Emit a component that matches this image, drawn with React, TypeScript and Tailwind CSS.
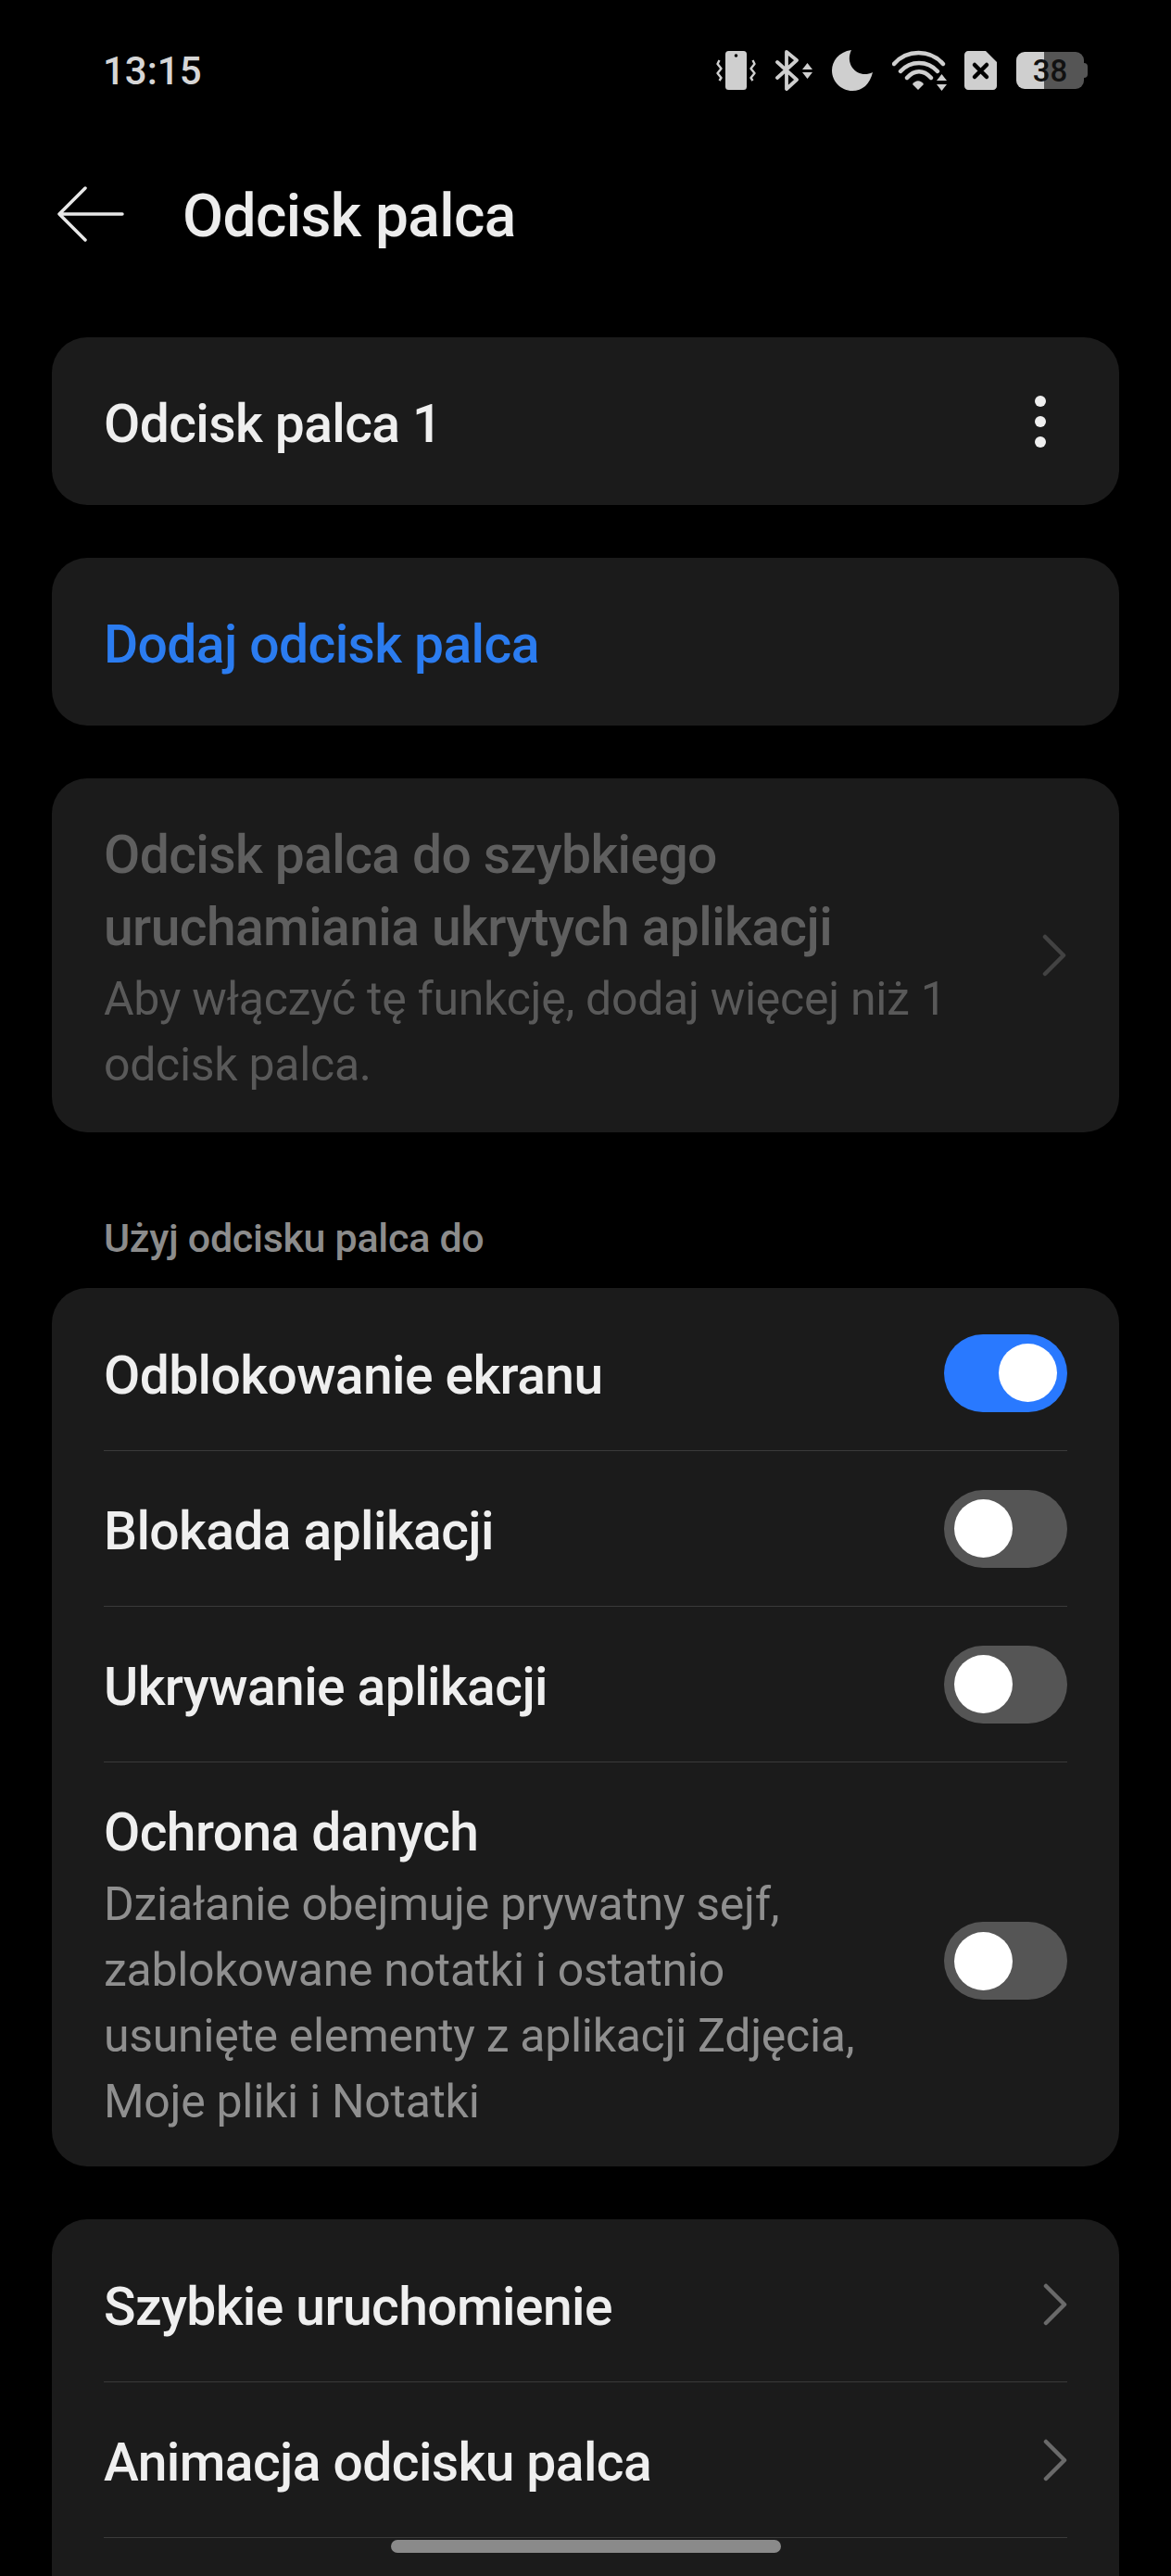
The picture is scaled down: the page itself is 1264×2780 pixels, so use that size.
type RowProps = {
  label: string;
  checked?: boolean;
};

const font = "font-['Roboto',sans-serif]";

function Chevron({ dim }: { dim?: boolean }) {
  return (
    <svg width="26" height="46" viewBox="0 0 26 46" fill="none" className="shrink-0">
      <path
        d="M3 3 L23 23 L3 43"
        stroke={dim ? "#424242" : "#6a6a6a"}
        strokeWidth="4.5"
        strokeLinecap="round"
        strokeLinejoin="round"
      />
    </svg>
  );
}

function Toggle({ checked }: { checked?: boolean }) {
  return (
    <div
      className={
        checked
          ? "flex h-[84px] w-[133px] shrink-0 items-center justify-end rounded-full bg-[#2979ff] px-[11px]"
          : "flex h-[84px] w-[133px] shrink-0 items-center justify-start rounded-full bg-[#555555] px-[11px]"
      }
    >
      <div className="h-[63px] w-[63px] rounded-full bg-white" />
    </div>
  );
}

function ToggleRow({ label, checked }: RowProps) {
  return (
    <div className="flex h-[168px] items-center justify-between border-b border-[#3a3a3a]">
      <span className="pt-[6px] text-[57px] font-medium tracking-[-0.6px] text-[#efefef]">{label}</span>
      <Toggle checked={checked} />
    </div>
  );
}

function LinkRow({ label }: { label: string }) {
  return (
    <div className="flex h-[168px] items-center justify-between border-b border-[#3a3a3a]">
      <span className="pt-[6px] text-[57px] font-medium tracking-[-0.6px] text-[#efefef]">{label}</span>
      <Chevron />
    </div>
  );
}

function StatusIcons() {
  return (
    <div className="flex items-center">
      {/* vibrate */}
      <svg width="43" height="44" viewBox="0 0 43 44" className="mr-[21px]">
        <rect x="10" y="1" width="23" height="42" rx="3.5" fill="#cfcfcf" />
        <circle cx="21.5" cy="6" r="1.8" fill="#000" />
        <path
          d="M3.5 11 L1.5 15 L5.5 20 L1.5 25 L5.5 30 L3.5 33 M39.5 11 L41.5 15 L37.5 20 L41.5 25 L37.5 30 L39.5 33"
          stroke="#cfcfcf"
          strokeWidth="2.4"
          fill="none"
          strokeLinejoin="round"
        />
      </svg>
      {/* bluetooth */}
      <svg width="41" height="44" viewBox="0 0 41 44" className="mr-[20px]">
        <path
          d="M2 13 L23 32 L12 42 L12 2 L23 11 L2 30"
          stroke="#cfcfcf"
          strokeWidth="3.8"
          fill="none"
          strokeLinejoin="round"
          strokeLinecap="round"
        />
        <path d="M29 21 L34.5 14 L40 21 Z M29 24 L40 24 L34.5 31 Z" fill="#cfcfcf" />
      </svg>
      {/* moon */}
      <svg width="44" height="44" viewBox="0 0 44 44" className="mr-[21px]">
        <path
          d="M21 0 C7 2 0 12 0 22 C0 34 10 44 22 44 C33 44 41 37 44 24 C36 28 27 26 22 19 C18 13 18 6 21 0 Z"
          fill="#cfcfcf"
        />
      </svg>
      {/* wifi */}
      <svg width="59" height="44" viewBox="0 0 59 44" className="mr-[19px]">
        <path
          d="M2 15 C16 -1 41 -1 55 15 M9 23 C20 11 38 11 49 23 M16 30 C24 21 34 21 42 30"
          stroke="#cfcfcf"
          strokeWidth="4.4"
          fill="none"
          strokeLinecap="round"
        />
        <path d="M22 37 C25 32 31 32 34 37 L28 43 Z" fill="#cfcfcf" />
        <path d="M48 33 L53.5 26 L59 33 Z M48 37 L59 37 L53.5 44 Z" fill="#cfcfcf" />
      </svg>
      {/* sim */}
      <svg width="35" height="42" viewBox="0 0 35 42" className="mr-[21px]">
        <path
          d="M4 0 L23 0 L35 12 L35 38 C35 40 33 42 31 42 L4 42 C2 42 0 40 0 38 L0 4 C0 2 2 0 4 0 Z"
          fill="#cfcfcf"
        />
        <path d="M11 15 L24 28 M24 15 L11 28" stroke="#000" strokeWidth="4.5" strokeLinecap="round" />
      </svg>
      {/* battery */}
      <div className="flex items-center">
        <div className="relative flex h-[40px] w-[73px] overflow-hidden rounded-[9px]">
          <div className="w-[30px] bg-[#cfcfcf]" />
          <div className="flex-1 bg-[#555555]" />
          <span className="absolute inset-0 flex items-center justify-center text-[33px] font-medium leading-none text-[#111111]">
            38
          </span>
        </div>
        <div className="h-[16px] w-[4px] rounded-r-full bg-[#555555]" />
      </div>
    </div>
  );
}

export default function App() {
  return (
    <div className={`relative h-[2780px] w-full overflow-hidden bg-black ${font}`}>
      <div className="flex h-[152px] items-center justify-between pl-[111px] pr-[90px]">
        <span className="text-[42px] font-medium text-[#d6d6d6]">13:15</span>
        <StatusIcons />
      </div>

      <div className="flex h-[158px] items-center pl-[62px]">
        <svg width="72" height="60" viewBox="0 0 72 60" fill="none" className="mr-[63px]">
          <path
            d="M30 2 L2 30 L30 58 M2 30 L70 30"
            stroke="#e8e8e8"
            strokeWidth="3.5"
            strokeLinecap="round"
            strokeLinejoin="round"
          />
        </svg>
        <h1 className="pt-[5px] text-[64px] font-medium tracking-[-0.6px] text-[#ececec]">Odcisk palca</h1>
      </div>

      <div className="px-[56px] pt-[54px]">
        <div className="flex h-[181px] items-center justify-between rounded-[38px] bg-[#1b1b1b] pl-[56px] pr-[79px]">
          <span className="pt-[6px] text-[57px] font-medium tracking-[-0.6px] text-[#efefef]">Odcisk palca 1</span>
          <div className="flex flex-col gap-[10px]">
            <div className="h-[12px] w-[12px] rounded-full bg-[#efefef]" />
            <div className="h-[12px] w-[12px] rounded-full bg-[#efefef]" />
            <div className="h-[12px] w-[12px] rounded-full bg-[#efefef]" />
          </div>
        </div>

        <div className="mt-[57px] flex h-[181px] items-center rounded-[38px] bg-[#1b1b1b] pl-[56px]">
          <span className="pt-[6px] text-[57px] font-medium tracking-[-0.6px] text-[#2b7cf0]">Dodaj odcisk palca</span>
        </div>

        <div className="mt-[57px] flex h-[382px] items-center justify-between rounded-[38px] bg-[#1b1b1b] pl-[56px] pr-[57px]">
          <div className="pt-[6px]">
            <div className="text-[57px] font-medium leading-[78px] tracking-[-0.6px] text-[#5f5f5f]">
              Odcisk palca do szybkiego
              <br />
              uruchamiania ukrytych aplikacji
            </div>
            <div className="mt-[3px] text-[50px] leading-[71px] tracking-[-0.3px] text-[#595959]">
              Aby włączyć tę funkcję, dodaj więcej niż 1
              <br />
              odcisk palca.
            </div>
          </div>
          <Chevron dim />
        </div>

        <div className="flex h-[168px] items-center pl-[56px] pt-[60px] text-[43px] font-medium tracking-[-0.3px] text-[#8c8c8c]">
          Użyj odcisku palca do
        </div>

        <div className="rounded-[38px] bg-[#1b1b1b] px-[56px] pt-[8px]">
          <ToggleRow label="Odblokowanie ekranu" checked />
          <ToggleRow label="Blokada aplikacji" />
          <ToggleRow label="Ukrywanie aplikacji" />
          <div className="flex h-[436px] items-center justify-between">
            <div className="pt-[3px]">
              <div className="text-[57px] font-medium leading-[78px] tracking-[-0.6px] text-[#efefef]">
                Ochrona danych
              </div>
              <div className="mt-[3px] text-[50px] leading-[71px] tracking-[-0.3px] text-[#8f8f8f]">
                Działanie obejmuje prywatny sejf,
                <br />
                zablokowane notatki i ostatnio
                <br />
                usunięte elementy z aplikacji Zdjęcia,
                <br />
                Moje pliki i Notatki
              </div>
            </div>
            <div className="mb-[8px]">
              <Toggle />
            </div>
          </div>
        </div>

        <div className="mt-[57px] rounded-t-[38px] bg-[#1b1b1b] px-[56px] pb-[100px] pt-[8px]">
          <LinkRow label="Szybkie uruchomienie" />
          <LinkRow label="Animacja odcisku palca" />
        </div>
      </div>

      <div className="absolute bottom-[25px] left-[422px] h-[14px] w-[421px] rounded-full bg-[#8a8a8a]" />
    </div>
  );
}
